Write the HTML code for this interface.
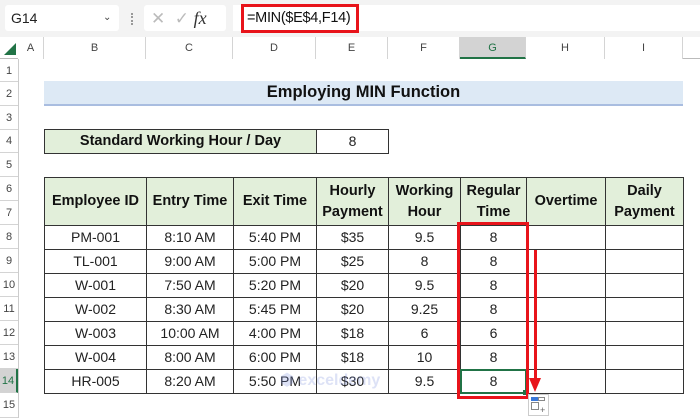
<!DOCTYPE html>
<html><head><style>
body{margin:0;width:700px;height:418px;overflow:hidden;background:#fff;font-family:"Liberation Sans",sans-serif;position:relative}
.a{position:absolute;box-sizing:border-box}
.ch{position:absolute;top:37px;height:22px;font-size:11px;color:#444;text-align:center;line-height:22px;border-right:1px solid #d4d4d4;box-sizing:border-box;background:#fff}
.rh{position:absolute;left:0;width:18px;font-size:11px;color:#444;text-align:center;border-bottom:1px solid #d4d4d4;box-sizing:border-box;background:#fff}
.c{position:absolute;box-sizing:border-box;display:flex;align-items:center;justify-content:center;text-align:center;font-size:14px;color:#222;line-height:21px}
.h{background:#e2efda;font-weight:bold;color:#111;font-size:14.5px}
</style></head><body>
<div class="a" style="left:0;top:0;width:700px;height:37px;background:#f3f3f3"></div>
<div class="a" style="left:5px;top:5px;width:114px;height:26px;background:#fff;border-radius:3px;font-size:14px;line-height:26px;padding-left:6px;color:#222">G14<span style="position:absolute;left:98px;top:0;font-size:10px;color:#444">&#8964;</span></div>
<div class="a" style="left:131px;top:13px;width:2px;height:12px;border-left:2px dotted #999"></div>
<div class="a" style="left:144px;top:5px;width:82px;height:26px;background:#fff;border-radius:3px;color:#bbb;font-size:17px;line-height:26px;padding-left:7px">&#10005;&nbsp;&nbsp;&#10003; <i style="font-family:'Liberation Serif',serif;color:#333;font-size:18px">fx</i></div>
<div class="a" style="left:233px;top:5px;width:467px;height:26px;background:#fff"></div>
<div class="a" style="left:241px;top:4px;width:118px;height:29px;border:3px solid #e8141b;font-size:14.5px;letter-spacing:-0.3px;line-height:23px;padding-left:3px;color:#111;white-space:nowrap">=MIN($E$4,F14)</div>
<div class="a" style="left:0;top:37px;width:700px;height:22px;background:#fff;border-bottom:1px solid #bbb"></div>
<div class="a" style="left:4px;top:43px;width:0;height:0;border-left:12px solid transparent;border-bottom:12px solid #217346"></div>
<div class="ch" style="left:18px;width:26px">A</div>
<div class="ch" style="left:44px;width:102px">B</div>
<div class="ch" style="left:146px;width:87px">C</div>
<div class="ch" style="left:233px;width:83px">D</div>
<div class="ch" style="left:316px;width:72px">E</div>
<div class="ch" style="left:388px;width:72px">F</div>
<div class="ch" style="left:460px;width:66px;background:#d3d3d3;border-bottom:2px solid #217346;color:#217346">G</div>
<div class="ch" style="left:526px;width:79px">H</div>
<div class="ch" style="left:605px;width:78px">I</div>
<div class="a" style="left:18px;top:59px;width:1px;height:359px;background:#ccc"></div>
<div class="rh" style="top:60px;height:22px;line-height:22px">1</div>
<div class="rh" style="top:82px;height:24px;line-height:24px">2</div>
<div class="rh" style="top:106px;height:24px;line-height:24px">3</div>
<div class="rh" style="top:130px;height:23px;line-height:23px">4</div>
<div class="rh" style="top:153px;height:24px;line-height:24px">5</div>
<div class="rh" style="top:177px;height:24px;line-height:24px">6</div>
<div class="rh" style="top:201px;height:24px;line-height:24px">7</div>
<div class="rh" style="top:225px;height:24px;line-height:24px">8</div>
<div class="rh" style="top:249px;height:24px;line-height:24px">9</div>
<div class="rh" style="top:273px;height:24px;line-height:24px">10</div>
<div class="rh" style="top:297px;height:24px;line-height:24px">11</div>
<div class="rh" style="top:321px;height:24px;line-height:24px">12</div>
<div class="rh" style="top:345px;height:24px;line-height:24px">13</div>
<div class="rh" style="top:369px;height:24px;line-height:24px;background:#d3d3d3;color:#217346;border-right:2px solid #217346">14</div>
<div class="rh" style="top:393px;height:25px;line-height:25px">15</div>
<div class="c" style="left:44px;top:81px;width:639px;height:25px;background:#dde9f5;border-bottom:2px solid #a9bde0;font-weight:bold;font-size:16.5px;color:#111">Employing MIN Function</div>
<div class="c h" style="left:44px;top:129px;width:273px;height:25px;border:1px solid #333">Standard Working Hour / Day</div>
<div class="c" style="left:316px;top:129px;width:73px;height:25px;border:1px solid #333">8</div>
<div id="t"></div>
<script>
var cols=[44,146,233,316,388,460,526,605,683];
var hd=["Employee ID","Entry Time","Exit Time","Hourly<br>Payment","Working<br>Hour","Regular<br>Time","Overtime","Daily<br>Payment"];
var rows=[["PM-001","8:10 AM","5:40 PM","$35","9.5","8"],["TL-001","9:00 AM","5:00 PM","$25","8","8"],["W-001","7:50 AM","5:20 PM","$20","9.5","8"],["W-002","8:30 AM","5:45 PM","$20","9.25","8"],["W-003","10:00 AM","4:00 PM","$18","6","6"],["W-004","8:00 AM","6:00 PM","$18","10","8"],["HR-005","8:20 AM","5:50 PM","$30","9.5","8"]];
var h="";
for(var i=0;i<8;i++){h+='<div class="c h" style="left:'+cols[i]+'px;top:177px;width:'+(cols[i+1]-cols[i]+1)+'px;height:49px;border:1px solid #333;white-space:nowrap">'+hd[i]+'</div>';}
for(var r=0;r<7;r++){for(var i=0;i<8;i++){var v=rows[r][i]||"";h+='<div class="c" style="left:'+cols[i]+'px;top:'+(225+r*24)+'px;width:'+(cols[i+1]-cols[i]+1)+'px;height:25px;border:1px solid #333">'+v+'</div>';}}
document.getElementById("t").innerHTML=h;
</script>
<div class="a" style="left:460px;top:369px;width:67px;height:25px;border:2px solid #217346"></div>
<div class="a" style="left:523px;top:390px;width:5px;height:5px;background:#217346"></div>
<div class="a" style="left:457px;top:222px;width:72px;height:177px;border:3px solid #e8141b"></div>
<div class="a" style="left:534px;top:250px;width:3px;height:130px;background:#e8141b"></div>
<div class="a" style="left:529px;top:378px;width:0;height:0;border-left:6.5px solid transparent;border-right:6.5px solid transparent;border-top:14px solid #e8141b"></div>
<div class="a" style="left:528px;top:394px;width:21px;height:22px;border:1px solid #ccc;background:#fff"></div>
<div class="a" style="left:531px;top:397px;width:7px;height:4px;background:#3b78d8"></div>
<div class="a" style="left:538px;top:397px;width:7px;height:4px;border:1px solid #888"></div>
<div class="a" style="left:531px;top:402px;width:8px;height:8px;border:1px solid #888"></div>
<div class="a" style="left:540px;top:405px;font-size:9px;color:#666">+</div>
<div class="a" style="left:280px;top:370px;font-size:16px;font-weight:bold;color:rgba(120,140,220,0.25)">&#11042; exceldemy</div>
</body></html>
